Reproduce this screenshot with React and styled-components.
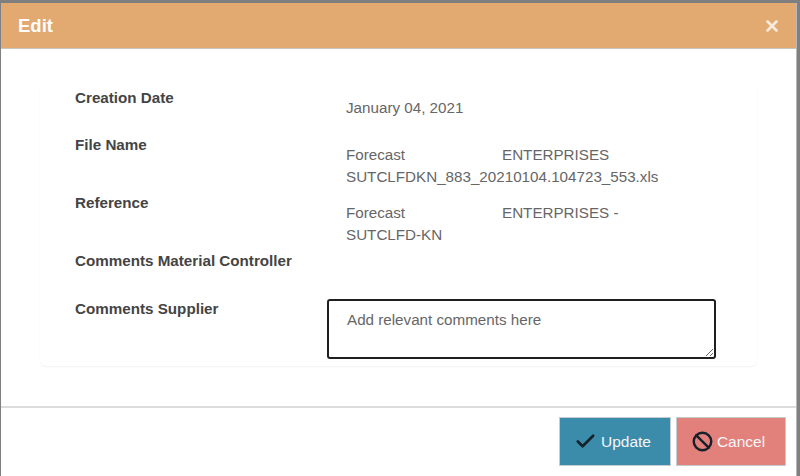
import React from 'react'
import styled, { createGlobalStyle } from 'styled-components'
import { Ban, Check, X } from 'lucide-react'

const GlobalStyle = createGlobalStyle`
  html, body {
    margin: 0;
    padding: 0;
    background: #7f7f7f;
    font-family: "Liberation Sans", Arial, sans-serif;
  }
`

const Backdrop = styled.div`
  width: 800px;
  height: 476px;
  box-sizing: border-box;
  padding: 3px 4px 0 1px;
  overflow: hidden;
`

const Modal = styled.div`
  height: 473px;
  display: flex;
  flex-direction: column;
  background: #fff;
  box-shadow: 1px 0 0 #b9b9b9;
`

const Header = styled.div`
  height: 46px;
  flex: none;
  box-sizing: border-box;
  padding: 0 15px 0 17px;
  display: flex;
  align-items: center;
  justify-content: space-between;
  background: #e2a971;
  border-bottom: 1px solid #c9c4bd;
`

const Title = styled.h4`
  margin: 0;
  font-size: 18.5px;
  font-weight: 700;
  color: #fff;
`

const CloseButton = styled.button`
  display: flex;
  padding: 0;
  border: none;
  background: none;
  color: #f8ebdc;
`

const Body = styled.div`
  flex: none;
  height: 359px;
  box-sizing: border-box;
  padding: 35px 39px 0;
  border-bottom: 2px solid #dcdcdc;
`

const Card = styled.div`
  height: 282px;
  box-sizing: border-box;
  padding: 4px 0 0 35px;
  display: grid;
  grid-template-columns: 252px 1fr;
  grid-auto-rows: minmax(42px, auto);
  align-content: start;
  row-gap: 5px;
  border-radius: 6px;
  box-shadow: 0 1px 2px rgba(0, 0, 0, 0.06);
`

const Label = styled.div`
  margin-top: ${({ $offset }) => $offset || 0}px;
  font-size: 15.2px;
  line-height: 20px;
  font-weight: 700;
  color: #444;
`

const Value = styled.div`
  margin: 9px 0 0 19px;
  font-size: 15.2px;
  line-height: 22px;
  color: #666;
`

const Line = styled.div`
  display: flex;
`

const LineStart = styled.span`
  width: 156px;
`

const Comments = styled.textarea`
  display: block;
  width: 389px;
  height: 60px;
  box-sizing: border-box;
  margin-top: 1px;
  padding: 9px 18px;
  border: 2px solid #1f1f1f;
  border-radius: 3px;
  outline: none;
  font-family: inherit;
  font-size: 15.2px;
  line-height: 20px;
  color: #666;
  &::placeholder {
    color: #666;
    opacity: 1;
  }
`

const Footer = styled.div`
  flex: 1;
  padding: 9px 10px 0 0;
  display: flex;
  justify-content: flex-end;
  align-items: flex-start;
  gap: 5px;
`

const ActionButton = styled.button`
  width: ${({ $width }) => $width}px;
  height: 49px;
  box-sizing: border-box;
  padding: 0 5px 0 0;
  display: flex;
  align-items: center;
  justify-content: center;
  gap: 4px;
  border: 1px solid #c4ccd0;
  background: ${({ $bg }) => $bg};
  color: #f4f7f8;
  font-family: inherit;
  font-size: 15.5px;
  svg {
    color: #16222b;
  }
`

const rows = [
  { label: 'Creation Date', lines: [['January 04, 2021']] },
  {
    label: 'File Name',
    lines: [['Forecast', 'ENTERPRISES'], ['SUTCLFDKN_883_20210104.104723_553.xls']],
  },
  {
    label: 'Reference',
    lines: [['Forecast', 'ENTERPRISES -'], ['SUTCLFD-KN']],
  },
  { label: 'Comments Material Controller', lines: [] },
]

const App = () => {
  return (
    <Backdrop>
      <GlobalStyle />
      <Modal>
        <Header>
          <Title>Edit</Title>
          <CloseButton aria-label="Close">
            <X size={18} strokeWidth={3.5} />
          </CloseButton>
        </Header>
        <Body>
          <Card>
            {rows.map((row) => (
              <React.Fragment key={row.label}>
                <Label>{row.label}</Label>
                <Value>
                  {row.lines.map((parts) => (
                    <Line key={parts[0]}>
                      {parts.length > 1 ? <LineStart>{parts[0]}</LineStart> : parts[0]}
                      {parts[1] && <span>{parts[1]}</span>}
                    </Line>
                  ))}
                </Value>
              </React.Fragment>
            ))}
            <Label $offset={1}>Comments Supplier</Label>
            <Comments placeholder="Add relevant comments here" />
          </Card>
        </Body>
        <Footer>
          <ActionButton $width={112} $bg="#3b8bab">
            <Check size={23} strokeWidth={2.8} />
            Update
          </ActionButton>
          <ActionButton $width={110} $bg="#e2807c">
            <Ban size={21} strokeWidth={2.8} />
            Cancel
          </ActionButton>
        </Footer>
      </Modal>
    </Backdrop>
  )
}

export default App
